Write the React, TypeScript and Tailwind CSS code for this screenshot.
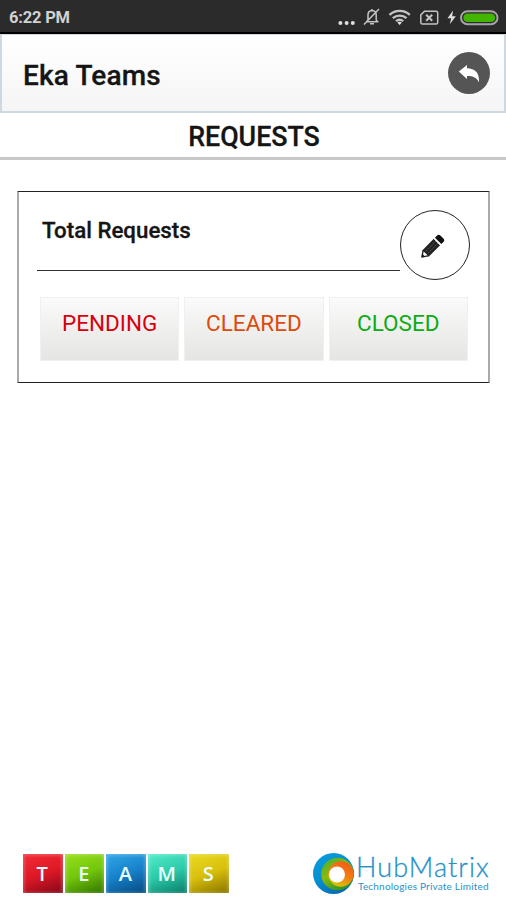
import React from "react";

function StatusIcons() {
  return (
    <svg width="164" height="32" viewBox="340 0 164 32" fill="none" stroke="#c4c4c4" strokeWidth="1.5">
      <g fill="#dedede" stroke="none">
        <circle cx="340.400" cy="23" r="2" />
        <circle cx="346.600" cy="23" r="2" />
        <circle cx="352.800" cy="23" r="2" />
      </g>
      <path d="M366 21.800h12.500M366.800 21.500l1.200-1.500v-5c0-2.800 1.700-4.300 4-4.500 2.300.2 4.200 1.700 4.200 4.500v5l1.200 1.500M370 23.800h4M364 24.500L379 9M372 9v2" />
      <g strokeWidth="2.400">
        <path d="M389.500 14.900c5.700-5.300 14.700-5.300 20.300 0M392.800 18.200c3.900-3.500 9.900-3.500 13.700 0M396 21.200c2.100-1.800 5.100-1.800 7.200 0" />
        <path d="M399.600 25l-2.200-2.500q2.200-1.500 4.400 0z" fill="#e4e4e4" stroke="none" />
      </g>
      <path d="M424.500 11.200H436q1.700 0 1.700 1.700v9.500q0 1.700-1.700 1.700h-13.500q-1.700 0-1.700-1.700v-7.500z" />
      <path d="M426.200 14.700l6 6M432.200 14.700l-6 6" strokeWidth="2" />
      <path d="M453 10.500l-5.500 7.700h3.700l-1.400 6 6-8h-3.600z" fill="#dedede" stroke="none" />
      <rect x="461" y="11.200" width="36.500" height="13" rx="6.500" stroke="#a8a3ab" strokeWidth="2" />
      <rect x="463.300" y="13.400" width="32" height="8.700" rx="4.300" fill="#41b500" stroke="none" />
    </svg>
  );
}

function BackIcon() {
  return (
    <svg width="42" height="42" viewBox="0 0 42 42">
      <circle cx="21" cy="21" r="21" fill="#555555" />
      <path d="M10.800 19.500l8.200-6.500v3.200c8 .2 12.500 4.300 12 14-2.200-4.500-6-6.300-12-6.200v3z" fill="#fff" />
    </svg>
  );
}

function PencilIcon() {
  return (
    <svg width="26" height="26" viewBox="0 0 26 26">
      <g transform="rotate(-45 13 13)">
        <path d="M-2 13L4 8.500H20v9H4z" fill="#222" />
        <path d="M0 13l4-2.800v5.600z" fill="#fff" />
        <path d="M-2 13l3.300-2.400v4.800z" fill="#151515" />
        <path d="M6 11.500h14M6 14.500h14" stroke="#777" strokeWidth=".7" strokeDasharray="1.500 1" />
        <path d="M20 8.500h1.700v9H20z" fill="#fff" />
        <path d="M21.700 8.500h3.300q2 0 2 2v5q0 2-2 2h-3.300z" fill="#111" />
      </g>
    </svg>
  );
}

const requests = [
  { label: "PENDING", style: "text-[#d9000d]" },
  { label: "CLEARED", style: "text-[#dc4b0b]" },
  { label: "CLOSED", style: "text-[#0dab14]" },
];

const tiles = [
  { letter: "T", style: "from-[#f22a35] via-[#df1826] to-[#850817]" },
  { letter: "E", style: "from-[#97df1b] via-[#72c60c] to-[#327500]" },
  { letter: "A", style: "from-[#32a6e7] via-[#1681ca] to-[#074a80]" },
  { letter: "M", style: "from-[#51eccb] via-[#2bcaa8] to-[#087d69]" },
  { letter: "S", style: "from-[#eadb20] via-[#d8bf0b] to-[#897400]" },
];

function HubLogo() {
  return (
    <div className="flex text-[#2791cb]">
      <svg width="44" height="46" viewBox="312 850 44 46">
        <defs>
          <linearGradient id="outer" x1="0" y1="0" x2=".7" y2="1">
            <stop offset="0" stopColor="#079fdf" /><stop offset=".5" stopColor="#078fd0" /><stop offset="1" stopColor="#0868b2" />
          </linearGradient>
          <linearGradient id="middle" x1="0" y1="0" x2=".6" y2="1">
            <stop offset="0" stopColor="#3faf3c" /><stop offset=".5" stopColor="#8aba0c" /><stop offset="1" stopColor="#2e942c" />
          </linearGradient>
          <linearGradient id="inner" x1=".8" y1="0" x2=".3" y2="1">
            <stop offset="0" stopColor="#ef5a1c" /><stop offset=".5" stopColor="#f47b12" /><stop offset="1" stopColor="#d5cc08" />
          </linearGradient>
        </defs>
        <circle cx="333.500" cy="873.500" r="20.500" fill="url(#outer)" />
        <circle cx="337.500" cy="874" r="16.300" fill="url(#middle)" />
        <circle cx="340.800" cy="874" r="12.700" fill="url(#inner)" />
        <circle cx="337" cy="874.500" r="8" fill="#fff" />
      </svg>
      <div className="w-[136px] pt-[3px] font-['Lato',sans-serif] whitespace-nowrap">
        <div className="h-[27px] text-[27px] leading-[27px] font-light tracking-[1.1px] [-webkit-text-stroke:0.3px_#2791cb]">HubMatrix</div>
        <div className="pl-[2px] text-[10px] leading-[12px] tracking-[0.2px]">Technologies Private Limited</div>
      </div>
    </div>
  );
}

export default function App() {
  return (
    <main className="flex h-[900px] w-[506px] flex-col overflow-hidden bg-white font-['Roboto',sans-serif] text-[#151515]">
      <div className="flex h-[34px] shrink-0 justify-between border-b-2 border-black bg-[#2b2b2b] pl-[9px] pr-[2px]">
        <span className="pt-[6px] text-[16.500px] leading-6 font-bold tracking-[-0.2px] text-[#d2d2d2]">6:22 PM</span>
        <div className="[&>svg]:overflow-visible"><StatusIcons /></div>
      </div>
      <header className="flex h-[79px] shrink-0 items-center justify-between border-2 border-t border-[#cfd7df] bg-linear-to-b from-white to-[#f5f5f6] pr-[14px] pl-[21px]">
        <h1 className="pt-[5px] text-[28px] font-medium tracking-[0.15px] [-webkit-text-stroke:0.3px_#151515]">Eka Teams</h1>
        <button aria-label="Back"><BackIcon /></button>
      </header>
      <h2 className="flex h-[47px] shrink-0 items-center justify-center border-b-3 border-[#c8c8c8] pl-[2px] pt-[5px] text-[26.800px] font-medium [-webkit-text-stroke:0.3px_#151515]">REQUESTS</h2>
      <section className="mt-[31px] ml-[17px] h-[192px] w-[473px] shrink-0 border-x-2 border-y border-x-[#aaa] border-y-[#222] pt-[18px]">
        <div className="flex h-[71px]">
          <div className="ml-[18px] h-[61px] w-[363px] border-b-[1.500px] border-[#333] pt-[4px] pl-[5px] text-[22.300px] leading-[32px] font-medium [-webkit-text-stroke:0.3px_#151515]">Total Requests</div>
          <button aria-label="Edit requests" className="flex size-[70px] items-center justify-center rounded-full border border-[#222] pr-[6px] pt-[3px] [&>svg]:overflow-visible"><PencilIcon /></button>
        </div>
        <div className="mt-[16px] ml-[21px] flex gap-[5px]">
          {requests.map(({ label, style }) => (
            <button key={label} className={`flex h-[64px] w-[139.300px] justify-center border border-[#f0f0f0] bg-linear-to-b from-[#fafafa] to-[#e5e5e3] pt-[9px] text-[22.500px] leading-[32px] ${style}`}>{label}</button>
          ))}
        </div>
      </section>
      <footer className="mt-auto flex h-[50px] shrink-0 items-start justify-between pl-[23px] pr-[14px]">
        <div className="flex gap-[2px] pt-[4px]">
          {tiles.map(({ letter, style }) => (
            <span key={letter} className={`flex h-[38.500px] w-[39.500px] items-center justify-center bg-linear-160 pr-[1px] pt-[2px] font-['Open_Sans',sans-serif] text-[20px] font-semibold text-[#e7ffff] shadow-[inset_2px_2px_3px_#ffffff30,inset_-2px_-1px_3px_#ffffff30] ${style}`}>{letter}</span>
          ))}
        </div>
        <HubLogo />
      </footer>
    </main>
  );
}
